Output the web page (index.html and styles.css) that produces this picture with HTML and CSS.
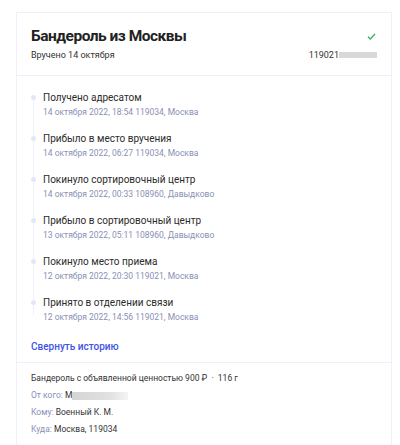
FILE: index.html
```html
<!DOCTYPE html>
<html>
<head>
<meta charset="utf-8"/>
<title>Бандероль из Москвы</title>
<link rel="stylesheet" href="styles.css">
</head>
<body>
<div class="card">
  <div class="head">
    <div class="head-row">
      <h1>Бандероль из Москвы</h1>
      <svg class="check" width="9" height="7" viewBox="0 0 9 7"><path d="M1 3.8 L3.3 6 L8 1" fill="none" stroke="#3cb35a" stroke-width="1.3"/></svg>
    </div>
    <div class="head-row sub">
      <span>Вручено 14 октября</span>
      <span class="track">119021<span class="blur"></span></span>
    </div>
  </div>

  <div class="history">
    <ul class="steps">
      <li>
        <div class="step-title">Получено адресатом</div>
        <div class="step-info">14 октября 2022, 18:54 119034, Москва</div>
      </li>
      <li>
        <div class="step-title">Прибыло в место вручения</div>
        <div class="step-info">14 октября 2022, 06:27 119034, Москва</div>
      </li>
      <li>
        <div class="step-title">Покинуло сортировочный центр</div>
        <div class="step-info">14 октября 2022, 00:33 108960, Давыдково</div>
      </li>
      <li>
        <div class="step-title">Прибыло в сортировочный центр</div>
        <div class="step-info">13 октября 2022, 05:11 108960, Давыдково</div>
      </li>
      <li>
        <div class="step-title">Покинуло место приема</div>
        <div class="step-info">12 октября 2022, 20:30 119021, Москва</div>
      </li>
      <li>
        <div class="step-title">Принято в отделении связи</div>
        <div class="step-info">12 октября 2022, 14:56 119021, Москва</div>
      </li>
    </ul>
    <a class="toggle" href="#">Свернуть историю</a>
  </div>

  <div class="details">
    <p>Бандероль с объявленной ценностью 900 ₽ &nbsp;·&nbsp; 116 г</p>
    <p><span class="label">От кого:</span> М<span class="blur wide"></span></p>
    <p><span class="label">Кому:</span> Военный К. М.</p>
    <p><span class="label">Куда:</span> Москва, 119034</p>
  </div>
</div>
</body>
</html>
```

FILE: styles.css
```css
body {
   margin: 0;
   background-color: white;
   font-family: Roboto, "Noto Sans", sans-serif;
   color: #2b2b2b;
}

.card {
   margin: 12px 8px 0 16px;
   border: 1px solid #eff0fa;
   border-bottom: none;
}

.head {
   padding: 14px 14px 14px 14px;
   border-bottom: 1px solid #eff0fa;
}

.head-row {
   display: flex;
   justify-content: space-between;
   align-items: center;
}

h1 {
   margin: 0;
   font-size: 15.5px;
   line-height: 18px;
   font-weight: 700;
   letter-spacing: -0.5px;
   color: #222;
}

.check {
   margin-right: 1px;
}

.sub {
   margin-top: 4px;
   font-size: 9px;
   line-height: 12px;
   color: #333;
}

.track {
   display: flex;
   align-items: center;
}

.blur {
   display: inline-block;
   width: 38px;
   height: 6px;
   background: #d9d9d9;
}

.blur.wide {
   width: 56px;
   height: 8px;
   background: linear-gradient(to right, #d4d4d4, #e2e2e2 70%, #f4f4f4);
   vertical-align: middle;
}

.history {
   padding: 15px 14px 8px 14px;
   border-bottom: 1px solid #eff0fa;
}

.steps {
   list-style: none;
   margin: 0;
   padding: 0;
   position: relative;
}

.steps::before {
   content: "";
   position: absolute;
   left: 2px;
   top: 6px;
   bottom: 10px;
   width: 1px;
   background: #eef0fa;
}

.steps li {
   position: relative;
   padding-left: 12px;
   margin-bottom: 12px;
}

.steps li::before {
   content: "";
   position: absolute;
   left: 0;
   top: 4px;
   width: 5px;
   height: 5px;
   border-radius: 50%;
   background: #e4e7f8;
}

.step-title {
   font-size: 10px;
   color: #2b2b2b;
   line-height: 14px;
}

.step-info {
   font-size: 8.5px;
   color: #8a8fb5;
   line-height: 15px;
}

.toggle {
   display: block;
   margin-top: 15px;
   font-size: 10px;
   font-weight: 500;
   line-height: 14px;
   color: #3f54e4;
   text-decoration: none;
}

.details {
   padding: 7px 14px;
}

.details p {
   margin: 0;
   font-size: 8.5px;
   line-height: 17px;
   color: #333;
}

.label {
   color: #8a8fb5;
}
```
